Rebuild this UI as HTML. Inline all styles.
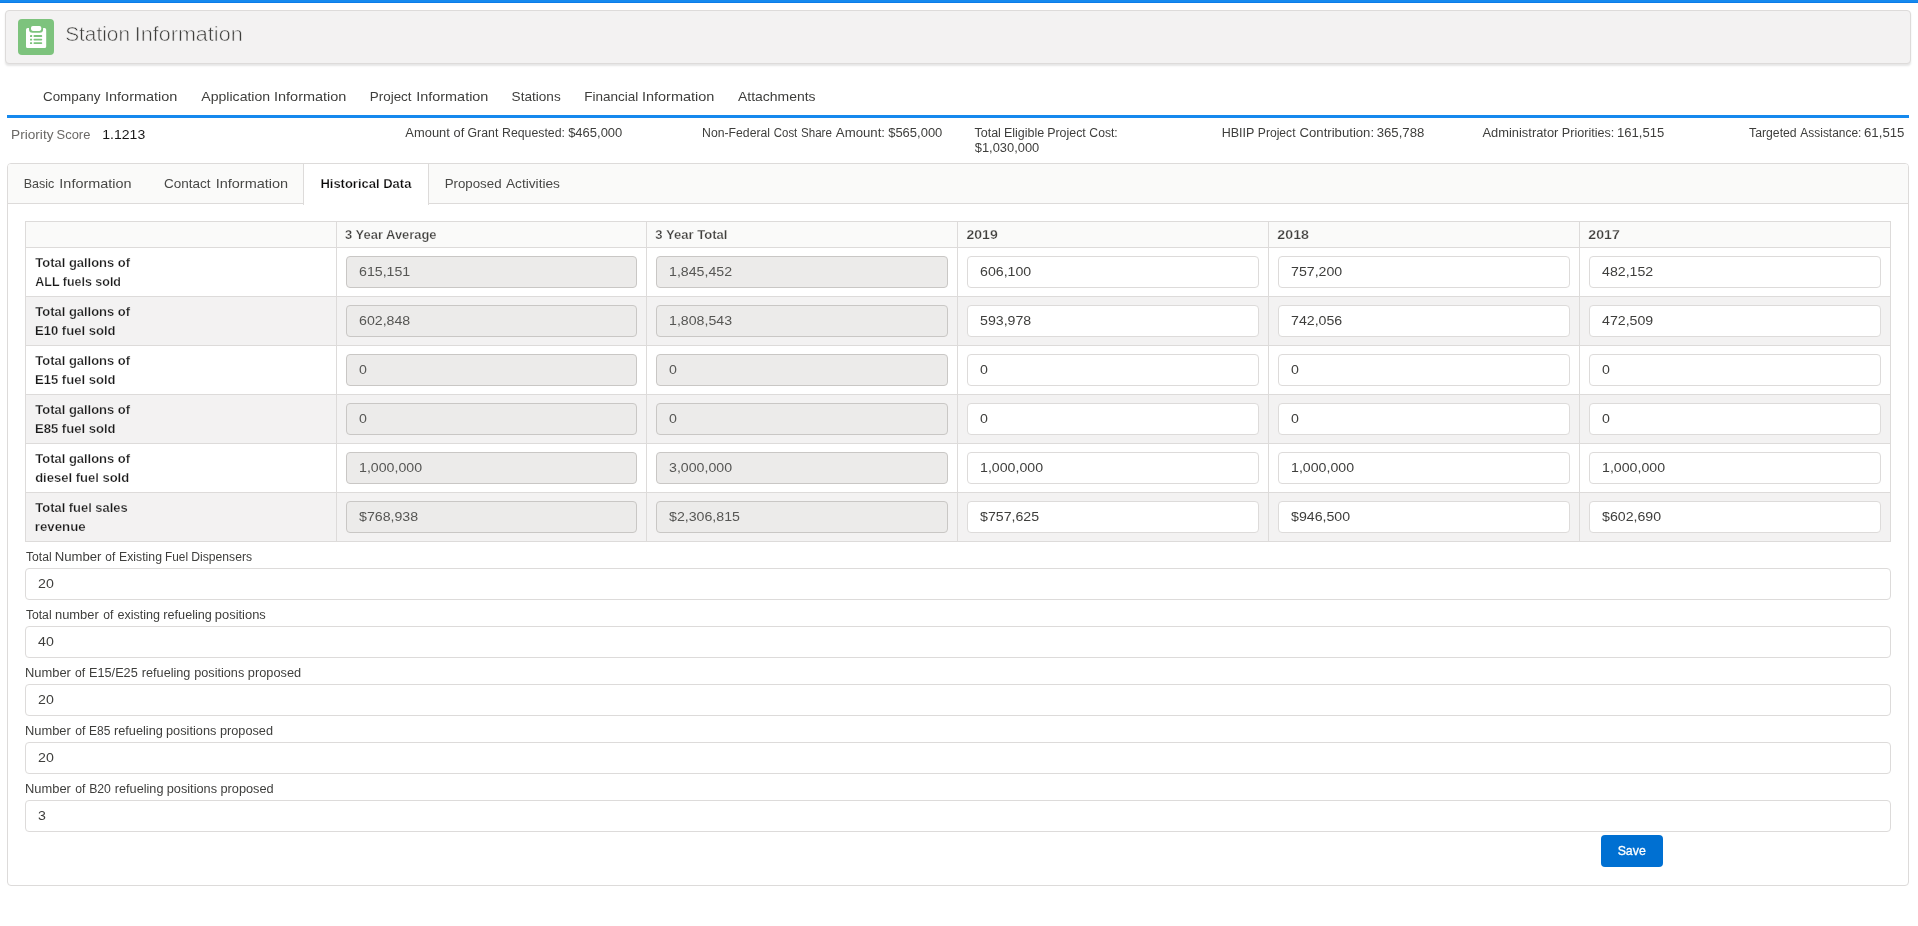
<!DOCTYPE html>
<html lang="en">
<head>
<meta charset="utf-8">
<title>Station Information</title>
<style>
*{box-sizing:border-box;margin:0;padding:0}
html,body{width:1918px;height:926px;overflow:hidden;background:#fff}
body{will-change:transform;font-family:"Liberation Sans",Arial,sans-serif;font-size:13px;color:#3e3e3c;line-height:1.5;position:relative}
.t{position:absolute;white-space:nowrap;transform-origin:0 0;font-weight:400}
.t span{position:absolute;top:0;white-space:nowrap;transform-origin:0 0}
.r{position:relative;display:inline-block;white-space:nowrap;transform-origin:0 0}
.v{display:inline-block;white-space:nowrap;transform-origin:0 0;transform:scaleX(1.0900)}
.topbar{position:absolute;left:0;top:0;width:1918px;height:3px;background:linear-gradient(#1589ee 0,#1589ee 2px,#0b7ce9 2px)}
.header{position:absolute;left:5px;top:10px;width:1906px;height:54px;background:#f3f2f2;border:1px solid #dddbda;border-radius:4px;box-shadow:0 2px 2px 0 rgba(0,0,0,.10)}
.icon{position:absolute;left:18px;top:19px;width:36px;height:36px;border-radius:4px;background:#7dc37d}
.icon svg{position:absolute;left:0;top:0;width:36px;height:36px}
.title{font-size:20px;line-height:30px;color:#3e3e3c;-webkit-text-stroke:.55px #f3f2f2}
.navline{position:absolute;left:7px;top:115px;width:1902px;height:3px;background:#1589ee}
.nav{line-height:40px;font-size:13px;color:#3e3e3c}
.ps{font-size:13px;line-height:20px;color:#181818}
.ps .lbl{color:#6b6966}
.st{font-size:12px;line-height:15px;color:#3e3e3c}
.box{position:absolute;left:7px;top:163px;width:1902px;height:723px;border:1px solid #dddbda;border-radius:4px;background:#fff}
.tabs{position:absolute;left:8px;top:164px;width:1900px;height:40px;background:#fafaf9;border-bottom:1px solid #dddbda;border-radius:3px 3px 0 0}
.tabact{position:absolute;left:303px;top:164px;width:126px;height:41px;background:#fff;border-left:1px solid #dddbda;border-right:1px solid #dddbda}
.tab{line-height:40px;font-size:13px;color:#484846}
.tab.act{font-weight:700;color:#080707;-webkit-text-stroke:.25px #fff}
table{position:absolute;left:25px;top:221px;width:1866px;border-collapse:separate;border-spacing:0;border-top:1px solid #dddbda;border-left:1px solid #dddbda;table-layout:fixed}
th,td{border-right:1px solid #dddbda;border-bottom:1px solid #dddbda;text-align:left;vertical-align:middle}
thead th{height:26px;background:#fafaf9;font-weight:700;font-size:13px;color:#403f3d;padding:0 8px;line-height:25px}
tbody th{height:49px;font-weight:700;font-size:13px;line-height:19px;color:#181818;padding:0 9px}
tbody td{height:49px;padding:0 9px}
tbody tr:nth-child(even) th,tbody tr:nth-child(even) td{background:#f3f2f2}
thead th{-webkit-text-stroke:.25px #fafaf9}
tbody th{-webkit-text-stroke:.25px #fff}
tbody tr:nth-child(even) th{-webkit-text-stroke:.25px #f3f2f2}
.inp{display:block;width:100%;height:32px;border:1px solid #dddbda;border-radius:4px;background:#fff;padding:0 12px;font-size:13px;line-height:30px;color:#3e3e3c}
.inp.dis{background:#ecebea;border-color:#c9c7c5;color:#565654}
.fi{position:absolute;left:25px;width:1866px}
.lb{font-size:12px;line-height:18px;color:#3e3e3c}
.save{position:absolute;left:1601px;top:835px;width:62px;height:32px;border-radius:4px;background:#0070d2}
.savet{color:#fff;font-size:13px;line-height:32px;-webkit-text-stroke:.3px #fff}
</style>
</head>
<body>
<div class="topbar"></div>
<div class="header"></div>
<div class="icon"><svg viewBox="0 0 36 36"><path fill="#fff" d="M8 10.700a1.600 1.600 0 0 1 1.600-1.600H11v1.200a3.500 3.500 0 0 0 3.500 3.500h7.100a3.500 3.500 0 0 0 3.500-3.500V9.100h1.500a1.600 1.600 0 0 1 1.600 1.600v16.700a1.600 1.600 0 0 1-1.600 1.600H9.600A1.600 1.600 0 0 1 8 27.400z"/><rect fill="#fff" x="13" y="7" width="10.300" height="4.900" rx="1.800"/><g fill="#7dc37d"><rect x="12" y="16.100" width="2.100" height="1.900" rx=".3"/><rect x="15.500" y="16.100" width="8.700" height="1.900" rx=".8"/><rect x="12" y="19.650" width="2.100" height="1.900" rx=".3"/><rect x="15.500" y="19.650" width="8.700" height="1.900" rx=".8"/><rect x="12" y="23.200" width="2.100" height="1.900" rx=".3"/><rect x="15.500" y="23.200" width="8.700" height="1.900" rx=".8"/></g></svg></div>
<h1 class="t title" id="title" style="left:0;top:19px"><span id="title_0" style="left:65px;transform:translateX(0.14px) scaleX(1.0423)">Station</span> <span id="title_1" style="left:134px;transform:translateX(0.73px) scaleX(1.0785)">Information</span></h1>
<div class="navline"></div>
<a class="t nav" id="nav1" style="left:0;top:77px"><span id="nav1_0" style="left:42px;transform:translateX(0.94px) scaleX(1.0317)">Company</span> <span id="nav1_1" style="left:105px;transform:translateX(0.00px) scaleX(1.1137)">Information</span></a>
<a class="t nav" id="nav2" style="left:0;top:77px"><span id="nav2_0" style="left:201px;transform:translateX(0.35px) scaleX(1.0810)">Application</span> <span id="nav2_1" style="left:273px;transform:translateX(0.99px) scaleX(1.1131)">Information</span></a>
<a class="t nav" id="nav3" style="left:0;top:77px"><span id="nav3_0" style="left:369px;transform:translateX(0.79px) scaleX(1.0321)">Project</span> <span id="nav3_1" style="left:416px;transform:translateX(0.24px) scaleX(1.1094)">Information</span></a>
<a class="t nav" id="nav4" style="left:0;top:77px"><span id="nav4_0" style="left:511px;transform:translateX(0.62px) scaleX(1.0453)">Stations</span></a>
<a class="t nav" id="nav5" style="left:0;top:77px"><span id="nav5_0" style="left:584px;transform:translateX(0.30px) scaleX(1.0375)">Financial</span> <span id="nav5_1" style="left:641px;transform:translateX(0.95px) scaleX(1.1140)">Information</span></a>
<a class="t nav" id="nav6" style="left:0;top:77px"><span id="nav6_0" style="left:737px;transform:translateX(0.94px) scaleX(1.0748)">Attachments</span></a>
<div class="t ps" id="ps" style="left:0;top:125px"><span id="ps_0" class="lbl" style="left:11px;transform:translateX(0.07px) scaleX(1.0485)">Priority</span> <span id="ps_1" class="lbl" style="left:56px;transform:translateX(0.60px) scaleX(0.9929)">Score</span> <span id="ps_2" style="left:102px;transform:translateX(0.31px) scaleX(1.0782)">1.1213</span></div>
<div class="t st" id="amt" style="left:0;top:126px"><span id="amt_0" style="left:405px;transform:translateX(0.36px) scaleX(1.0747)">Amount</span> <span id="amt_1" style="left:453px;transform:translateX(0.57px) scaleX(1.0625)">of</span> <span id="amt_2" style="left:467px;transform:translateX(0.55px) scaleX(1.0248)">Grant</span> <span id="amt_3" style="left:501px;transform:translateX(0.98px) scaleX(1.0268)">Requested:</span> <span id="amt_4" style="left:568px;transform:translateX(0.14px) scaleX(1.0822)">$465,000</span></div>
<div class="t st" id="nonfed" style="left:0;top:126px"><span id="nonfed_0" style="left:702px;transform:translateX(0.10px) scaleX(1.0184)">Non-Federal</span> <span id="nonfed_1" style="left:773px;transform:translateX(0.84px) scaleX(0.9501)">Cost</span> <span id="nonfed_2" style="left:800px;transform:translateX(0.94px) scaleX(0.9672)">Share</span> <span id="nonfed_3" style="left:835px;transform:translateX(0.84px) scaleX(1.1007)">Amount:</span> <span id="nonfed_4" style="left:888px;transform:translateX(0.18px) scaleX(1.0821)">$565,000</span></div>
<div class="t st" id="tot1" style="left:0;top:126px"><span id="tot1_0" style="left:974px;transform:translateX(0.43px) scaleX(1.0440)">Total</span> <span id="tot1_1" style="left:1003px;transform:translateX(0.95px) scaleX(1.0439)">Eligible</span> <span id="tot1_2" style="left:1047px;transform:translateX(0.18px) scaleX(1.0340)">Project</span> <span id="tot1_3" style="left:1089px;transform:translateX(0.36px) scaleX(1.0133)">Cost:</span></div>
<div class="t st" id="tot2" style="left:0;top:141px"><span id="tot2_0" style="left:974px;transform:translateX(0.78px) scaleX(1.0741)">$1,030,000</span></div>
<div class="t st" id="hbiip" style="left:0;top:126px"><span id="hbiip_0" style="left:1221px;transform:translateX(0.73px) scaleX(1.0411)">HBIIP</span> <span id="hbiip_1" style="left:1257px;transform:translateX(0.85px) scaleX(1.0078)">Project</span> <span id="hbiip_2" style="left:1299px;transform:translateX(0.55px) scaleX(1.0955)">Contribution:</span> <span id="hbiip_3" style="left:1376px;transform:translateX(0.71px) scaleX(1.0966)">365,788</span></div>
<div class="t st" id="admin" style="left:0;top:126px"><span id="admin_0" style="left:1482px;transform:translateX(0.50px) scaleX(1.0732)">Administrator</span> <span id="admin_1" style="left:1561px;transform:translateX(0.85px) scaleX(1.0480)">Priorities:</span> <span id="admin_2" style="left:1617px;transform:translateX(0.11px) scaleX(1.0856)">161,515</span></div>
<div class="t st" id="targ" style="left:0;top:126px"><span id="targ_0" style="left:1749px;transform:translateX(0.02px) scaleX(1.0196)">Targeted</span> <span id="targ_1" style="left:1800px;transform:translateX(0.34px) scaleX(0.9948)">Assistance:</span> <span id="targ_2" style="left:1864px;transform:translateX(0.03px) scaleX(1.1002)">61,515</span></div>
<div class="box"></div>
<div class="tabs"></div>
<div class="tabact"></div>
<a class="t tab" id="tab1" style="left:0;top:164px"><span id="tab1_0" style="left:23px;transform:translateX(0.76px) scaleX(0.9619)">Basic</span> <span id="tab1_1" style="left:59px;transform:translateX(0.36px) scaleX(1.1086)">Information</span></a>
<a class="t tab" id="tab2" style="left:0;top:164px"><span id="tab2_0" style="left:163px;transform:translateX(0.95px) scaleX(1.0385)">Contact</span> <span id="tab2_1" style="left:215px;transform:translateX(0.66px) scaleX(1.1138)">Information</span></a>
<a class="t tab act" id="tab3" style="left:0;top:164px"><span id="tab3_0" style="left:320px;transform:translateX(0.39px) scaleX(0.9994)">Historical Data</span></a>
<a class="t tab" id="tab4" style="left:0;top:164px"><span id="tab4_0" style="left:444px;transform:translateX(0.65px) scaleX(1.0218)">Proposed</span> <span id="tab4_1" style="left:505px;transform:translateX(0.89px) scaleX(1.0543)">Activities</span></a>
<table><colgroup><col style="width:311px"><col style="width:310px"><col style="width:311px"><col style="width:311px"><col style="width:311px"><col style="width:311px"></colgroup>
<thead><tr><th></th><th><span class="r" id="th1" style="left:0px;transform:translateX(0.08px) scaleX(0.9937)">3 Year Average</span></th><th><span class="r" id="th2" style="left:0px;transform:translateX(0.29px) scaleX(1.0060)">3 Year Total</span></th><th><span class="r" id="th3" style="left:0px;transform:translateX(0.53px) scaleX(1.0772)">2019</span></th><th><span class="r" id="th4" style="left:0px;transform:translateX(0.37px) scaleX(1.0899)">2018</span></th><th><span class="r" id="th5" style="left:0px;transform:translateX(0.28px) scaleX(1.0880)">2017</span></th></tr></thead>
<tbody>
<tr><th><span class="r" id="ra1" style="left:0px;transform:translateX(0.33px) scaleX(0.9961)">Total gallons of</span><br><span class="r" id="rb1" style="left:0px;transform:translateX(0.31px) scaleX(0.9590)">ALL fuels sold</span></th><td><div class="inp dis"><span class="v">615,151</span></div></td><td><div class="inp dis"><span class="v">1,845,452</span></div></td><td><div class="inp"><span class="v">606,100</span></div></td><td><div class="inp"><span class="v">757,200</span></div></td><td><div class="inp"><span class="v">482,152</span></div></td></tr>
<tr><th><span class="r" id="ra2" style="left:0px;transform:translateX(0.33px) scaleX(0.9961)">Total gallons of</span><br><span class="r" id="rb2" style="left:-1px;transform:translateX(0.93px) scaleX(1.0054)">E10 fuel sold</span></th><td><div class="inp dis"><span class="v">602,848</span></div></td><td><div class="inp dis"><span class="v">1,808,543</span></div></td><td><div class="inp"><span class="v">593,978</span></div></td><td><div class="inp"><span class="v">742,056</span></div></td><td><div class="inp"><span class="v">472,509</span></div></td></tr>
<tr><th><span class="r" id="ra3" style="left:0px;transform:translateX(0.33px) scaleX(0.9961)">Total gallons of</span><br><span class="r" id="rb3" style="left:-1px;transform:translateX(0.93px) scaleX(1.0055)">E15 fuel sold</span></th><td><div class="inp dis"><span class="v">0</span></div></td><td><div class="inp dis"><span class="v">0</span></div></td><td><div class="inp"><span class="v">0</span></div></td><td><div class="inp"><span class="v">0</span></div></td><td><div class="inp"><span class="v">0</span></div></td></tr>
<tr><th><span class="r" id="ra4" style="left:0px;transform:translateX(0.33px) scaleX(0.9961)">Total gallons of</span><br><span class="r" id="rb4" style="left:-1px;transform:translateX(0.93px) scaleX(1.0054)">E85 fuel sold</span></th><td><div class="inp dis"><span class="v">0</span></div></td><td><div class="inp dis"><span class="v">0</span></div></td><td><div class="inp"><span class="v">0</span></div></td><td><div class="inp"><span class="v">0</span></div></td><td><div class="inp"><span class="v">0</span></div></td></tr>
<tr><th><span class="r" id="ra5" style="left:0px;transform:translateX(0.33px) scaleX(0.9961)">Total gallons of</span><br><span class="r" id="rb5" style="left:0px;transform:translateX(0.17px) scaleX(1.0009)">diesel fuel sold</span></th><td><div class="inp dis"><span class="v">1,000,000</span></div></td><td><div class="inp dis"><span class="v">3,000,000</span></div></td><td><div class="inp"><span class="v">1,000,000</span></div></td><td><div class="inp"><span class="v">1,000,000</span></div></td><td><div class="inp"><span class="v">1,000,000</span></div></td></tr>
<tr><th><span class="r" id="ra6" style="left:0px;transform:translateX(0.36px) scaleX(0.9930)">Total fuel sales</span><br><span class="r" id="rb6" style="left:-1px;transform:translateX(0.83px) scaleX(1.0198)">revenue</span></th><td><div class="inp dis"><span class="v">$768,938</span></div></td><td><div class="inp dis"><span class="v">$2,306,815</span></div></td><td><div class="inp"><span class="v">$757,625</span></div></td><td><div class="inp"><span class="v">$946,500</span></div></td><td><div class="inp"><span class="v">$602,690</span></div></td></tr>
</tbody></table>
<label class="t lb" id="l1" style="left:0;top:548px"><span id="l1_0" style="left:25px;transform:translateX(0.97px) scaleX(1.0112)">Total</span> <span id="l1_1" style="left:54px;transform:translateX(0.68px) scaleX(1.0946)">Number</span> <span id="l1_2" style="left:105px;transform:translateX(0.37px) scaleX(0.9880)">of</span> <span id="l1_3" style="left:119px;transform:translateX(0.09px) scaleX(1.0199)">Existing</span> <span id="l1_4" style="left:164px;transform:translateX(0.97px) scaleX(0.9877)">Fuel</span> <span id="l1_5" style="left:191px;transform:translateX(0.28px) scaleX(1.0120)">Dispensers</span></label>
<div class="fi" style="top:568px"><div class="inp"><span class="v">20</span></div></div>
<label class="t lb" id="l2" style="left:0;top:606px"><span id="l2_0" style="left:25px;transform:translateX(0.88px) scaleX(1.0145)">Total</span> <span id="l2_1" style="left:54px;transform:translateX(0.96px) scaleX(1.0776)">number</span> <span id="l2_2" style="left:103px;transform:translateX(0.16px) scaleX(1.0100)">of</span> <span id="l2_3" style="left:117px;transform:translateX(0.38px) scaleX(1.0501)">existing</span> <span id="l2_4" style="left:163px;transform:translateX(0.30px) scaleX(1.0559)">refueling</span> <span id="l2_5" style="left:214px;transform:translateX(0.87px) scaleX(1.0749)">positions</span></label>
<div class="fi" style="top:626px"><div class="inp"><span class="v">40</span></div></div>
<label class="t lb" id="l3" style="left:0;top:664px"><span id="l3_0" style="left:25px;transform:translateX(0.00px) scaleX(1.0760)">Number</span> <span id="l3_1" style="left:74px;transform:translateX(0.95px) scaleX(1.0157)">of</span> <span id="l3_2" style="left:89px;transform:translateX(0.02px) scaleX(1.0583)">E15/E25</span> <span id="l3_3" style="left:141px;transform:translateX(0.79px) scaleX(1.0564)">refueling</span> <span id="l3_4" style="left:194px;transform:translateX(0.23px) scaleX(1.0555)">positions</span> <span id="l3_5" style="left:247px;transform:translateX(0.86px) scaleX(1.0643)">proposed</span></label>
<div class="fi" style="top:684px"><div class="inp"><span class="v">20</span></div></div>
<label class="t lb" id="l4" style="left:0;top:722px"><span id="l4_0" style="left:24px;transform:translateX(0.95px) scaleX(1.0748)">Number</span> <span id="l4_1" style="left:75px;transform:translateX(0.16px) scaleX(1.0134)">of</span> <span id="l4_2" style="left:89px;transform:translateX(0.00px) scaleX(0.9970)">E85</span> <span id="l4_3" style="left:113px;transform:translateX(0.89px) scaleX(1.0647)">refueling</span> <span id="l4_4" style="left:165px;transform:translateX(0.99px) scaleX(1.0642)">positions</span> <span id="l4_5" style="left:219px;transform:translateX(0.95px) scaleX(1.0602)">proposed</span></label>
<div class="fi" style="top:742px"><div class="inp"><span class="v">20</span></div></div>
<label class="t lb" id="l5" style="left:0;top:780px"><span id="l5_0" style="left:25px;transform:translateX(0.05px) scaleX(1.0740)">Number</span> <span id="l5_1" style="left:75px;transform:translateX(0.16px) scaleX(1.0137)">of</span> <span id="l5_2" style="left:89px;transform:translateX(0.13px) scaleX(1.0188)">B20</span> <span id="l5_3" style="left:114px;transform:translateX(0.80px) scaleX(1.0568)">refueling</span> <span id="l5_4" style="left:166px;transform:translateX(0.70px) scaleX(1.0625)">positions</span> <span id="l5_5" style="left:220px;transform:translateX(0.46px) scaleX(1.0641)">proposed</span></label>
<div class="fi" style="top:800px"><div class="inp"><span class="v">3</span></div></div>
<div class="save"></div>
<div class="t savet" id="save" style="left:0;top:835px"><span id="save_0" style="left:1617px;transform:translateX(0.64px) scaleX(0.9492)">Save</span></div>
</body>
</html>
